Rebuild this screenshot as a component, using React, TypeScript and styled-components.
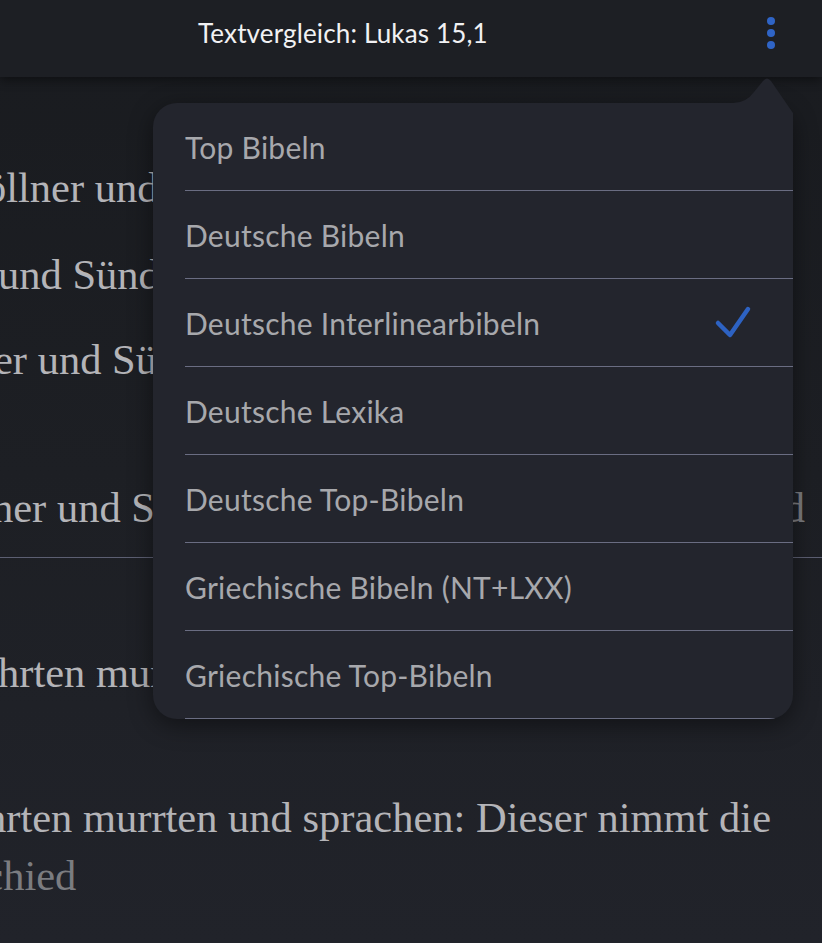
import React from "react";
import styled, { createGlobalStyle } from "styled-components";

const GlobalStyle = createGlobalStyle`
  html, body { margin: 0; padding: 0; background: #1c1e23; }
  body { overflow: hidden; }
`;

const Page = styled.div`
  position: relative;
  width: 822px;
  height: 943px;
  overflow: hidden;
  background: linear-gradient(180deg, #191b1f 0%, #1d1f24 50%, #21232a 100%);
  display: flex;
  flex-direction: column;
`;

const Header = styled.header`
  position: relative;
  z-index: 2;
  flex: 0 0 77px;
  height: 77px;
  box-sizing: border-box;
  display: flex;
  align-items: flex-start;
  justify-content: space-between;
  padding: 17px 47px 0 198px;
  background: #1d1f24;
  box-shadow: 0 3px 10px rgba(0, 0, 0, 0.45);
`;

const Title = styled.h1`
  margin: 1px 0 0;
  font-family: Lato, "Noto Sans", sans-serif;
  font-weight: 400;
  font-size: 26px;
  line-height: 1.2;
  color: #f1f1f3;
  letter-spacing: 0.15px;
`;

const Kebab = styled.button`
  display: flex;
  flex-direction: column;
  gap: 4px;
  padding: 0;
  border: 0;
  background: none;
`;

const Dot = styled.span`
  width: 8px;
  height: 8px;
  border-radius: 50%;
  background: #2f64c6;
`;

const Content = styled.main`
  display: flex;
  flex-direction: column;
  padding-top: 82px;
`;

const Line = styled.div<{ $shift: number; $gap: number }>`
  display: flex;
  justify-content: space-between;
  white-space: nowrap;
  margin-top: ${(p) => p.$gap}px;
  margin-left: -${(p) => p.$shift}px;
  height: 58px;
  line-height: 58px;
  font-family: "Liberation Serif", "Times New Roman", serif;
  font-size: 42.5px;
  color: #b4b4b8;
`;

const Muted = styled.span`
  color: #7b7c80;
  padding-right: 17px;
`;

const Rule = styled.hr`
  margin: 20px 0 0;
  border: 0;
  height: 1px;
  background: #5c5f72;
`;

const MenuWrap = styled.div`
  position: absolute;
  z-index: 3;
  top: 103px;
  left: 153px;
  width: 640px;
`;

const Notch = styled.svg`
  position: absolute;
  top: -26px;
  right: 0;
  width: 60px;
  height: 52px;
  z-index: 1;
`;

const Panel = styled.ul`
  list-style: none;
  margin: 0;
  padding: 0;
  height: 616px;
  overflow: hidden;
  border-radius: 24px;
  background: #23252d;
  box-shadow: 0 6px 24px rgba(0, 0, 0, 0.45);
`;

const Item = styled.li`
  position: relative;
  z-index: 2;
  height: 87px;
  margin-left: 32px;
  padding-right: 41px;
  display: flex;
  align-items: center;
  justify-content: space-between;
  border-bottom: 1px solid #6a6d82;
  font-family: Lato, "Noto Sans", sans-serif;
  font-size: 30px;
  letter-spacing: 0.25px;
  color: #a7a8ac;
`;

const Check = () => (
  <svg width="40" height="40" viewBox="0 0 40 40" fill="none">
    <path
      d="M6 20 L18 32 L36 6"
      stroke="#2d62c2"
      strokeWidth="4.5"
      strokeLinecap="round"
      strokeLinejoin="round"
    />
  </svg>
);

const items = [
  "Top Bibeln",
  "Deutsche Bibeln",
  "Deutsche Interlinearbibeln",
  "Deutsche Lexika",
  "Deutsche Top-Bibeln",
  "Griechische Bibeln (NT+LXX)",
  "Griechische Top-Bibeln",
];

export default function App() {
  return (
    <>
      <GlobalStyle />
      <Page>
        <Header>
          <Title>Textvergleich: Lukas 15,1</Title>
          <Kebab aria-label="Menü">
            <Dot />
            <Dot />
            <Dot />
          </Kebab>
        </Header>
        <Content>
          <Line $shift={41} $gap={0}>Zöllner und Sünder, dass sie ihn hörten.</Line>
          <Line $shift={2} $gap={29}>und Sünder, um ihn zu hören.</Line>
          <Line $shift={6} $gap={27}>er und Sünder.</Line>
          <Line $shift={8} $gap={90}>
            <span>her und Sünder, ihn zu hören.</span>
            <Muted>kein Unterschied</Muted>
          </Line>
          <Rule />
          <Line $shift={2} $gap={86}>hrten murrten und sprachen:</Line>
          <Line $shift={15} $gap={87}>hrten murrten und sprachen: Dieser nimmt die</Line>
          <Line $shift={129} $gap={0}>
            <Muted>Unterschied</Muted>
          </Line>
        </Content>
        <MenuWrap>
          <Notch viewBox="0 0 60 52">
            <path
              d="M0 26 Q 13 26 21 15 L 30 4 Q 34 -1 38 4 L 60 36 L 60 52 L 0 52 Z"
              fill="#23252d"
            />
          </Notch>
          <Panel>
            {items.map((label) => (
              <Item key={label}>
                <span>{label}</span>
                {label === "Deutsche Interlinearbibeln" && <Check />}
              </Item>
            ))}
          </Panel>
        </MenuWrap>
      </Page>
    </>
  );
}
